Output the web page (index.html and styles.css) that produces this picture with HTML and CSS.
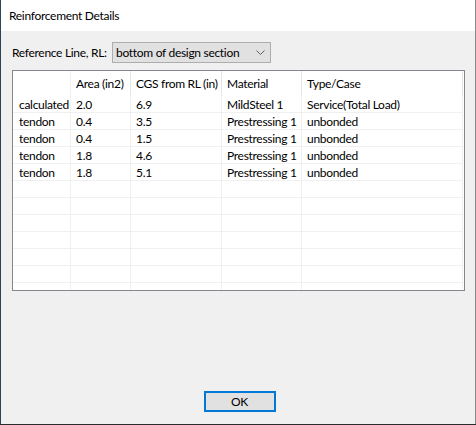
FILE: index.html
```html
<!DOCTYPE html>
<html>
<head>
<meta charset="utf-8">
<link rel="stylesheet" href="styles.css">
</head>
<body>
<div class="window">
  <div class="titlebar">Reinforcement Details</div>
  <div class="content">
    <div class="refrow">
      <span class="label">Reference Line, RL:</span>
      <div class="combo">
        <span class="combotext">bottom of design section</span>
        <svg class="chev" width="9" height="5" viewBox="0 0 9 5"><path d="M0.5 0.5 L4.5 4.5 L8.5 0.5" fill="none" stroke="#606060" stroke-width="1"/></svg>
      </div>
    </div>
    <div class="gridbox">
      <table class="grid">
        <colgroup>
          <col class="c0"><col class="c1"><col class="c2"><col class="c3"><col class="c4">
        </colgroup>
        <thead>
          <tr><th class="first"></th><th>Area (in2)</th><th>CGS from RL (in)</th><th>Material</th><th>Type/Case</th></tr>
        </thead>
        <tbody>
          <tr><td class="first">calculated</td><td>2.0</td><td>6.9</td><td>MildSteel 1</td><td>Service(Total Load)</td></tr>
          <tr><td class="first">tendon</td><td>0.4</td><td>3.5</td><td>Prestressing 1</td><td>unbonded</td></tr>
          <tr><td class="first">tendon</td><td>0.4</td><td>1.5</td><td>Prestressing 1</td><td>unbonded</td></tr>
          <tr><td class="first">tendon</td><td>1.8</td><td>4.6</td><td>Prestressing 1</td><td>unbonded</td></tr>
          <tr><td class="first">tendon</td><td>1.8</td><td>5.1</td><td>Prestressing 1</td><td>unbonded</td></tr>
          <tr><td></td><td></td><td></td><td></td><td></td></tr>
          <tr><td></td><td></td><td></td><td></td><td></td></tr>
          <tr><td></td><td></td><td></td><td></td><td></td></tr>
          <tr><td></td><td></td><td></td><td></td><td></td></tr>
          <tr><td></td><td></td><td></td><td></td><td></td></tr>
          <tr><td></td><td></td><td></td><td></td><td></td></tr>
          <tr><td></td><td></td><td></td><td></td><td></td></tr>
        </tbody>
      </table>
    </div>
    <div class="buttons">
      <button class="ok">OK</button>
    </div>
  </div>
</div>
</body>
</html>
```

FILE: styles.css
```css
html, body {
  margin: 0;
  padding: 0;
  background: #2a2a2a;
}
body {
  width: 476px;
  height: 425px;
  overflow: hidden;
  font-family: Lato, "Liberation Sans", sans-serif;
  font-size: 12px;
  letter-spacing: -0.3px;
  color: #000;
}
.window {
  box-sizing: border-box;
  width: 476px;
  height: 424px;
  border-left: 1px solid #2b4656;
  border-right: 1px solid #8a8a8a;
  display: flex;
  flex-direction: column;
  background: #f0f0f0;
}
.titlebar {
  height: 31px;
  background: #fff;
  padding-left: 8px;
  display: flex;
  align-items: center;
  padding-bottom: 1px;
  box-sizing: border-box;
  white-space: nowrap;
}
.content {
  flex: 1;
  display: flex;
  flex-direction: column;
  padding: 11px 10px 12px 11px;
}
.refrow {
  display: flex;
  align-items: center;
  height: 21px;
}
.label {
  width: 100px;
  white-space: nowrap;
}
.combo {
  box-sizing: border-box;
  width: 159px;
  height: 21px;
  background: #e1e1e1;
  border: 1px solid #adadad;
  display: flex;
  align-items: center;
  justify-content: space-between;
  padding: 0 5px 0 3px;
}
.combotext {
  white-space: nowrap;
}
.chev {
  display: block;
}
.gridbox {
  box-sizing: border-box;
  margin-top: 7px;
  width: 453px;
  height: 221px;
  border: 1px solid #828790;
  background: #fff;
  overflow: hidden;
}
.grid {
  border-collapse: separate;
  border-spacing: 0;
  table-layout: fixed;
  width: 450px;
}
.c0 { width: 58px; }
.c1 { width: 60px; }
.c2 { width: 91px; }
.c3 { width: 80px; }
.c4 { width: 161px; }
.grid th {
  font-weight: normal;
  text-align: left;
  height: 25px;
  padding: 0 0 1px 5px;
  box-sizing: border-box;
  border-right: 1px solid #e5e5e5;
  white-space: nowrap;
  overflow: hidden;
}
.grid th.first {
  border-right-color: #f0f0f0;
}
.grid td {
  height: 17px;
  padding: 0 0 0 5px;
  box-sizing: border-box;
  border-right: 1px solid #f0f0f0;
  border-bottom: 1px solid #f0f0f0;
  white-space: nowrap;
  overflow: hidden;
  line-height: 15px;
}
.grid td.first {
  padding-left: 6px;
}
.buttons {
  margin-top: auto;
  display: flex;
  justify-content: center;
}
.ok {
  box-sizing: border-box;
  width: 72px;
  height: 21px;
  margin-left: 2px;
  border: 2px solid #0078d7;
  background: #e1e1e1;
  font-family: inherit;
  font-size: 12px;
  letter-spacing: inherit;
  color: #000;
  padding: 0;
}
```
